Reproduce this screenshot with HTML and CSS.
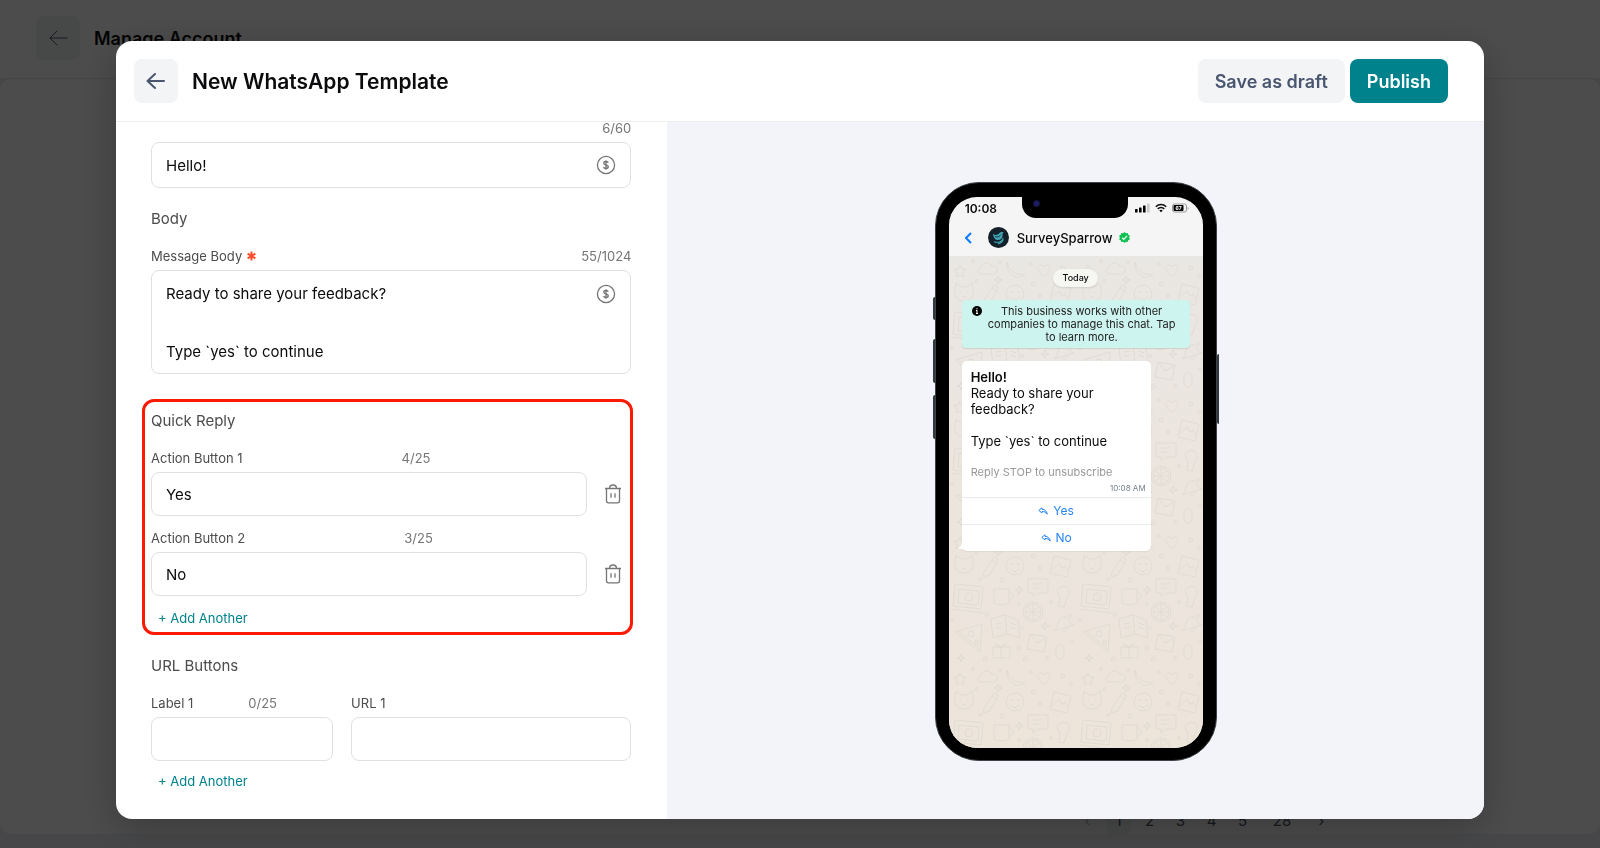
FILE: index.html
```html
<!DOCTYPE html>
<html lang="en">
<head>
    <meta charset="UTF-8">
    <meta name="viewport" content="width=device-width, initial-scale=1.0">
    <title>New WhatsApp Template</title>
    <link rel="stylesheet" href="styles.css">
</head>
<body>
    <div class="page">
        <header class="page-header">
            <button class="back-button" aria-label="Back">
                <svg width="20" height="16" viewBox="0 0 20 16"><path d="M9 1 2 8l7 7M2 8h17"/></svg>
            </button>
            <h1>Manage Account</h1>
        </header>
        <main class="page-content">
            <nav class="pagination">
                <a href="#" class="disabled">‹</a>
                <a href="#" class="current">1</a>
                <a href="#">2</a>
                <a href="#">3</a>
                <a href="#">4</a>
                <a href="#">5</a>
                <a href="#" class="last">28</a>
                <a href="#">›</a>
            </nav>
        </main>
    </div>

    <div class="overlay">
        <div class="modal" role="dialog" aria-labelledby="modalTitle">
            <div class="modal-header">
                <button class="back-button" aria-label="Back">
                    <svg width="20" height="16" viewBox="0 0 20 16"><path d="M9 1 1.500 8 9 15M1.500 8H18"/></svg>
                </button>
                <h2 id="modalTitle">New WhatsApp Template</h2>
                <div class="modal-actions">
                    <button class="btn btn-light">Save as draft</button>
                    <button class="btn btn-primary">Publish</button>
                </div>
            </div>

            <div class="modal-body">
                <form class="template-form">
                    <section class="form-section">
                        <div class="label-row spread"><span></span><span class="counter">6/60</span></div>
                        <div class="field header-field">
                            <input type="text" value="Hello!" aria-label="Header text">
                            <button type="button" class="icon-button" aria-label="Insert variable">
                                <svg width="20" height="20" viewBox="0 0 20 20"><circle cx="10" cy="10" r="8.6"/><path d="M12.2 7.9c-.2-.9-1.100-1.400-2.200-1.400-1.200 0-2.200.6-2.200 1.700 0 2.400 4.500 1.200 4.500 3.600 0 1.100-1 1.700-2.300 1.700-1.200 0-2.200-.5-2.400-1.500M10 5.200v9.600"/></svg>
                            </button>
                        </div>
                    </section>

                    <section class="form-section">
                        <h3>Body</h3>
                        <div class="label-row spread">
                            <label for="messageBody">Message Body
                                <svg class="required" width="9" height="10" viewBox="0 0 9 10"><path d="M4.500.5v9M.6 2.700l7.800 4.600M8.400 2.700.6 7.300"/></svg>
                            </label>
                            <span class="counter">55/1024</span>
                        </div>
                        <div class="field body-field">
                            <textarea id="messageBody" rows="3">Ready to share your feedback?

Type `yes` to continue</textarea>
                            <button type="button" class="icon-button" aria-label="Insert variable">
                                <svg width="20" height="20" viewBox="0 0 20 20"><circle cx="10" cy="10" r="8.6"/><path d="M12.2 7.9c-.2-.9-1.100-1.400-2.200-1.400-1.200 0-2.200.6-2.200 1.700 0 2.400 4.500 1.200 4.500 3.600 0 1.100-1 1.700-2.300 1.700-1.200 0-2.200-.5-2.400-1.500M10 5.200v9.600"/></svg>
                            </button>
                        </div>
                    </section>

                    <section class="form-section quick-reply">
                        <h3>Quick Reply</h3>
                        <div class="label-row wide">
                            <label for="action1">Action Button 1</label>
                            <span class="counter">4/25</span>
                        </div>
                        <div class="action-row">
                            <div class="field"><input type="text" id="action1" value="Yes"></div>
                            <button type="button" class="icon-button trash" aria-label="Delete">
                                <svg width="18" height="20" viewBox="0 0 18 20"><path d="M1 4.500h16M5.500 4.500C5.500 2.300 6.800 1 9 1s3.500 1.300 3.500 3.500M2.500 4.500v12.300c0 1.200.8 2 2 2h9c1.200 0 2-.8 2-2V4.500M7 9.300v4.400M11 9.300v4.400"/></svg>
                            </button>
                        </div>
                        <div class="label-row wide">
                            <label for="action2">Action Button 2</label>
                            <span class="counter">3/25</span>
                        </div>
                        <div class="action-row">
                            <div class="field"><input type="text" id="action2" value="No"></div>
                            <button type="button" class="icon-button trash" aria-label="Delete">
                                <svg width="18" height="20" viewBox="0 0 18 20"><path d="M1 4.500h16M5.500 4.500C5.500 2.300 6.800 1 9 1s3.500 1.300 3.500 3.500M2.500 4.500v12.300c0 1.200.8 2 2 2h9c1.200 0 2-.8 2-2V4.500M7 9.300v4.400M11 9.300v4.400"/></svg>
                            </button>
                        </div>
                        <button type="button" class="add-button">+ Add Another</button>
                    </section>

                    <section class="form-section">
                        <h3>URL Buttons</h3>
                        <div class="url-row">
                            <div class="url-label">
                                <div class="label-row narrow">
                                    <label for="urlLabel">Label 1</label>
                                    <span class="counter">0/25</span>
                                </div>
                                <div class="field"><input type="text" id="urlLabel"></div>
                            </div>
                            <div class="url-value">
                                <div class="label-row"><label for="url1">URL 1</label></div>
                                <div class="field"><input type="text" id="url1"></div>
                            </div>
                        </div>
                        <button type="button" class="add-button">+ Add Another</button>
                    </section>
                </form>

                <div class="preview">
                    <div class="phone">
                        <span class="side-key mute"></span>
                        <span class="side-key volume-up"></span>
                        <span class="side-key volume-down"></span>
                        <span class="side-key power"></span>
                        <div class="screen">
                            <div class="notch"><span class="camera"></span></div>
                            <div class="status-bar">
                                <span class="clock">10:08</span>
                                <div class="status-icons">
                                    <svg width="15" height="10" viewBox="0 0 15 10"><rect x="0" y="6" width="2.600" height="3.500" rx=".6"/><rect x="4" y="4.500" width="2.600" height="5" rx=".6"/><rect x="8" y="2.500" width="2.600" height="7" rx=".6"/><rect x="12" y=".5" width="2.600" height="9" rx=".6" fill="#c9c9c9"/></svg>
                                    <svg width="12" height="10" viewBox="0 0 12 10"><path d="M.8 3.700a7.500 7.500 0 0 1 10.400 0M2.700 5.900a4.800 4.800 0 0 1 6.600 0" fill="none" stroke="#111" stroke-width="1.500"/><path d="M4.300 7.500a2.500 2.500 0 0 1 3.400 0L6 9.300z"/></svg>
                                    <svg width="17" height="10" viewBox="0 0 17 10"><rect x=".5" y="1" width="14" height="8" rx="2" fill="#f5f5f5" stroke="#999"/><rect x="1.500" y="2" width="10" height="6" rx="1"/><text x="3.500" y="7" font-size="5" font-weight="700" fill="#fff">67</text><path d="M15.700 4v2.400q1-.2 1-1.200t-1-1.200z" fill="#999"/></svg>
                                </div>
                            </div>
                            <div class="chat-header">
                                <svg class="chat-back" width="7" height="12" viewBox="0 0 7 12"><path d="M6 1 1 6l5 5"/></svg>
                                <svg class="avatar" width="21" height="21" viewBox="0 0 21 21"><circle cx="10.500" cy="10.500" r="10.500" fill="#14212a"/><path d="M5 6.500c2.200 2.600 4.600 1.500 6.200-.2 1.300-1.400 3-1.600 4.500-1l-1.200 1.500c.5 4.500-1.500 6-4 6.200-3 .2-5-1.500-5.500-6.500z" fill="#3fa3b1"/><path d="M6 14.800c4 1.200 8 .3 9.200-3.600M10 16.800c3-.6 4.600-2 5.200-4.400" fill="none" stroke="#3fa3b1" stroke-width="1.200"/><path d="M7 9.500c2 1 4.200.4 5.600-1.500" fill="none" stroke="#14212a" stroke-width=".8"/></svg>
                                <span class="chat-name">SurveySparrow</span>
                                <svg class="verified" width="11" height="11" viewBox="0 0 24 24"><path fill="#0fc152" d="m12 0 3 2.700 4-.7 1 4 3.700 1.700L22.200 12l1.500 4.300L20 18l-1 4-4-.7-3 2.700-3-2.700-4 .7-1-4-3.700-1.700L1.800 12 .3 7.700 4 6l1-4 4 .7z"/><path d="m7 12.500 3.500 3.500 7-7.500" fill="none" stroke="#fff" stroke-width="2.600"/></svg>
                            </div>
                            <div class="chat">
                                <svg class="wallpaper" width="100%" height="100%">
                                    <defs>
                                        <pattern id="doodles" width="128" height="136" patternUnits="userSpaceOnUse">
                                            <!-- star, cloud, banana, heart -->
                                            <path d="m11 9 2 4 4 .5-3 3 1 4.500-4-2.200-4 2.200 1-4.500-3-3L9 13z"/>
                                            <path d="M31 18a4 4 0 0 1 1-7 6 6 0 0 1 11-1 4 4 0 0 1 2 8z"/>
                                            <path d="M58 6c2 9 9 14 18 12-5 7-19 3-18-12z"/>
                                            <path d="M95 20c-8-5-7-11-3-11 2 0 3 2 3 2s1-2 3-2c4 0 5 6-3 11z"/>
                                            <!-- photo, cat, pencil -->
                                            <path d="m105 28 17 4-4 17-17-4zM104 41l6-6 3 5 3-2 2 4"/>
                                            <path d="m6 34 1-7 5 4h6l5-4 1 7c1 8-3 11-9 11S5 42 6 34zM12 36v1M18 36v1M13 40q2 2 4 0"/>
                                            <path d="m35 44 10-15 5 3-10 15-6 2zM43 32l5 3"/>
                                            <!-- smiley, chat bubble -->
                                            <circle cx="66" cy="38" r="9"/>
                                            <path d="M62 36h3M68 36h3M61 41q5 5 10 0"/>
                                            <path d="M79 51h20v14H89l-5 4v-4h-5zM84 56h9M84 60h6"/>
                                            <!-- laptop, mug -->
                                            <path d="m6 56 28 3-2 22-28-3zM10 61l20 2-1 14-20-2zM2 81l33 4"/>
                                            <circle cx="20" cy="69" r="4"/>
                                            <path d="M45 61h15v14q-7 4-15 0zM60 64q6 1 4 5t-4 3"/>
                                            <path d="M110 60c7-5 14 3 8 9l-3 10-5-1 1-10c-3-2-4-5-1-8z"/>
                                            <!-- orange slice, open book, bell -->
                                            <circle cx="84" cy="84" r="10"/>
                                            <circle cx="84" cy="84" r="8"/>
                                            <path d="M84 76v16M76 84h16M78 78l12 12M90 78 78 90"/>
                                            <path d="m42 91 14-4 13 5 2 18-13-4-14 4zM56 87l2 19M47 96l6-1M47 100l6-1M61 95l6 2M61 99l6 2"/>
                                            <path d="M105 103c5-2 2-12 9-14s6 8 11 8zM113 102q3 3 5-2"/>
                                            <!-- pizza, gift, envelope -->
                                            <path d="m6 104 27-8-2 28zM9 103l22 18"/>
                                            <circle cx="22" cy="106" r="3"/>
                                            <circle cx="28" cy="114" r="2"/>
                                            <path d="m81 106 17 3-3 15-17-3zM82 107l6 8 9-5"/>
                                            <path d="M44 119h17v11H44zM52 119v11M52 119c-7-6-7 0 0 0 7-6 7 0 0 0"/>
                                            <path d="m107 119 4-3 4 3v9l-4 4-4-4z"/>
                                            <!-- dots and sparkles between the drawings -->
                                            <path d="m49 20 1 3 3 1-3 1-1 3-1-3-3-1 3-1zM96 94l1 3 3 1-3 1-1 3-1-3-3-1 3-1zM70 58l1 3 3 1-3 1-1 3-1-3-3-1 3-1zM12 126l1 3 3 1-3 1-1 3-1-3-3-1 3-1z"/>
                                            <circle cx="24" cy="5" r="1.500"/><circle cx="51" cy="6" r="1.500"/><circle cx="82" cy="8" r="1.500"/>
                                            <circle cx="114" cy="12" r="2"/><circle cx="122" cy="20" r="1.500"/><circle cx="27" cy="25" r="1.500"/>
                                            <circle cx="84" cy="28" r="2"/><circle cx="91" cy="40" r="1.500"/><circle cx="31" cy="51" r="1.500"/>
                                            <circle cx="53" cy="52" r="2"/><circle cx="70" cy="76" r="1.500"/><circle cx="102" cy="74" r="1.500"/>
                                            <circle cx="38" cy="86" r="2"/><circle cx="121" cy="88" r="1.500"/><circle cx="73" cy="100" r="1.500"/>
                                            <circle cx="36" cy="131" r="2"/><circle cx="70" cy="120" r="1.500"/><circle cx="98" cy="130" r="1.500"/>
                                            <circle cx="123" cy="113" r="1.500"/><circle cx="3" cy="92" r="1.500"/><circle cx="76" cy="131" r="2"/>
                                        </pattern>
                                    </defs>
                                    <rect width="100%" height="100%" fill="url(#doodles)"/>
                                </svg>
                                <span class="day">Today</span>
                                <div class="notice">
                                    <svg width="10" height="10" viewBox="0 0 10 10"><circle cx="5" cy="5" r="5"/><path d="M5 4.300v3.200M4 4.500h1M4 7.500h2M5 2.200v1.200" stroke="#fff" stroke-width="1"/></svg>
                                    <p>This business works with other companies to manage this chat. Tap to learn more.</p>
                                </div>
                                <div class="bubble">
                                    <svg class="tail" width="8" height="6" viewBox="0 0 8 6"><path d="M4 0v6L0 5.500Q3 4 4 0zM4 0h4v6H4z"/></svg>
                                    <div class="bubble-text">
                                        <p><strong>Hello!</strong></p>
                                        <p>Ready to share your feedback?</p>
                                        <br>
                                        <p>Type `yes` to continue</p>
                                    </div>
                                    <p class="bubble-footer">Reply STOP to unsubscribe</p>
                                    <time class="bubble-time">10:08 AM</time>
                                    <button class="reply-button">
                                        <svg width="10" height="8" viewBox="0 0 10 8"><path d="M4 .8.800 3.400 4 6V4.500c2.300-.1 4 .6 5.200 2.700C9 4.300 7 2.500 4 2.300z"/></svg>
                                        Yes
                                    </button>
                                    <button class="reply-button">
                                        <svg width="10" height="8" viewBox="0 0 10 8"><path d="M4 .8.800 3.400 4 6V4.500c2.300-.1 4 .6 5.200 2.700C9 4.300 7 2.500 4 2.300z"/></svg>
                                        No
                                    </button>
                                </div>
                            </div>
                        </div>
                    </div>
                </div>
            </div>
        </div>
    </div>
</body>
</html>
```

FILE: styles.css
```css
* {
    margin: 0;
    padding: 0;
    box-sizing: border-box;
    font-family: Inter, "Liberation Sans", sans-serif;
}

:root {
    --primary-color: #00828d;
    --text-color: #0b0b0d;
    --label-color: #4c4c4c;
    --muted-color: #757575;
    --border-color: #e0e0e0;
    --light-color: #f3f4f6;
    --preview-color: #f3f4f9;
}

body {
    color: var(--text-color);
    overflow: hidden;
}

button {
    border: none;
    background: none;
    cursor: pointer;
}

svg {
    display: block;
    flex-shrink: 0;
}

/* Page behind the modal */
.page {
    display: flex;
    flex-direction: column;
    height: 100vh;
    padding-bottom: 14px;
    background: #eeeff4;
}

.page-header {
    display: flex;
    align-items: center;
    gap: 14px;
    height: 78px;
    padding: 0 36px 2px;
    background: white;
}

.page-header h1 {
    font-size: 18px;
    font-weight: 600;
}

.page-content {
    flex: 1;
    display: flex;
    align-items: flex-end;
    justify-content: flex-end;
    padding-right: 267px;
    background: white;
    border-top: 1px solid #e4e4e4;
    border-radius: 12px;
}

.pagination {
    display: flex;
    gap: 8px;
}

.pagination a {
    width: 23px;
    height: 28px;
    line-height: 30px;
    font-size: 15px;
    text-align: center;
    text-decoration: none;
    color: #4a5568;
    border-radius: 4px;
}

.pagination .current {
    background: #eff2f2;
}

.pagination .disabled {
    color: #b5bac2;
}

.pagination .last {
    width: 40px;
}

.back-button {
    display: flex;
    align-items: center;
    justify-content: center;
    width: 44px;
    height: 44px;
    background: var(--light-color);
    border-radius: 8px;
}

.back-button path {
    fill: none;
    stroke: #4a5670;
    stroke-width: 2;
    stroke-linecap: round;
    stroke-linejoin: round;
}

.page-header .back-button {
    background: #eff2f2;
}

.page-header .back-button path {
    stroke-width: 1;
}

/* Modal */
.overlay {
    position: fixed;
    inset: 0;
    display: flex;
    padding: 41px 116px 29px;
    background: rgba(0, 0, 0, 0.7);
}

.modal {
    flex: 1;
    display: flex;
    flex-direction: column;
    min-width: 0;
    background: white;
    border-radius: 16px;
    overflow: hidden;
    box-shadow: 0 10px 40px rgba(0, 0, 0, 0.25);
}

.modal-header {
    display: flex;
    align-items: center;
    gap: 14px;
    padding: 18px 36px 18px 18px;
    border-bottom: 1px solid #eeeeef;
}

.modal-header h2 {
    font-size: 21px;
    font-weight: 600;
}

.modal-actions {
    display: flex;
    gap: 5px;
    margin-left: auto;
}

.btn {
    height: 44px;
    padding: 0 17px;
    border-radius: 8px;
    font-size: 18px;
    font-weight: 600;
}

.btn-light {
    background: var(--light-color);
    color: #4a5670;
}

.btn-primary {
    background: var(--primary-color);
    color: white;
}

.modal-body {
    flex: 1;
    display: grid;
    grid-template-columns: 27fr 40fr;
    min-height: 0;
}

/* Form, scrolled to its end */
.template-form {
    display: flex;
    flex-direction: column;
    justify-content: flex-end;
    gap: 19px;
    min-height: 0;
    padding: 0 36px 29px 35px;
    overflow: hidden;
}

.form-section h3 {
    margin-bottom: 16px;
    font-size: 15px;
    font-weight: 400;
    line-height: 24px;
    color: var(--label-color);
}

.label-row {
    display: flex;
    margin-bottom: 5px;
    font-size: 13px;
    line-height: 18px;
    color: var(--label-color);
}

.label-row.spread {
    justify-content: space-between;
}

.label-row.wide {
    gap: 159px;
}

.label-row.narrow {
    gap: 55px;
}

.label-row label {
    display: flex;
    align-items: center;
    gap: 5px;
}

.counter {
    color: var(--muted-color);
}

.required {
    fill: none;
    stroke: #fb4f2c;
    stroke-width: 2;
}

.field {
    display: flex;
    align-items: center;
    flex: 1;
    height: 44px;
    padding: 0 14px;
    background: white;
    border: 1px solid var(--border-color);
    border-radius: 8px;
}

.field input,
.field textarea {
    flex: 1;
    width: 100%;
    min-width: 0;
    border: none;
    outline: none;
    background: none;
    font-size: 15px;
    color: var(--text-color);
}

.field textarea {
    line-height: 29px;
    resize: none;
    overflow: hidden;
}

.header-field {
    height: 46px;
}

.body-field {
    align-items: flex-start;
    height: 104px;
    padding-top: 8px;
}

.icon-button {
    display: flex;
    align-items: center;
    justify-content: center;
    height: 29px;
}

.icon-button svg {
    fill: none;
    stroke: #757575;
    stroke-width: 1.3;
}

.quick-reply {
    margin: 6px -2px 0 -9px;
    padding: 7px 0 5px 6px;
    border: 3px solid #fb1b05;
    border-radius: 12px;
}

.action-row {
    display: flex;
    align-items: center;
    gap: 9px;
    margin-bottom: 13px;
}

.trash {
    width: 34px;
}

.add-button {
    display: block;
    padding: 0 7px;
    font-size: 13px;
    line-height: 18px;
    color: var(--primary-color);
}

.url-row {
    display: flex;
    gap: 18px;
    margin-bottom: 11px;
}

.url-label {
    flex: 182;
}

.url-value {
    flex: 280;
}

/* Phone preview */
.preview {
    display: flex;
    align-items: center;
    justify-content: center;
    background: var(--preview-color);
}

.phone {
    position: relative;
    width: 282px;
    margin-top: 1px;
    padding: 14px 13px 12px;
    background: black;
    border: 1px solid #3d4248;
    border-radius: 44px;
}

.side-key {
    position: absolute;
    left: -3px;
    width: 2px;
    height: 44px;
    background: #33383e;
    border-radius: 2px 0 0 2px;
}

.mute {
    top: 114px;
    height: 23px;
}

.volume-up {
    top: 156px;
}

.volume-down {
    top: 212px;
}

.power {
    top: 171px;
    left: auto;
    right: -3px;
    height: 70px;
}

.screen {
    position: relative;
    display: flex;
    flex-direction: column;
    height: 551px;
    background: #f5f5f5;
    border-radius: 28px;
    overflow: hidden;
}

.notch {
    position: absolute;
    top: 0;
    left: 73px;
    width: 106px;
    height: 21px;
    background: black;
    border-radius: 0 0 14px 14px;
}

.camera {
    position: absolute;
    top: 3px;
    left: 11px;
    width: 7px;
    height: 7px;
    background: radial-gradient(#25257a, #0a0a22);
    border-radius: 50%;
}

.status-bar {
    display: flex;
    align-items: center;
    justify-content: space-between;
    height: 23px;
    padding: 0 14px 0 16px;
}

.clock {
    font-size: 12px;
    font-weight: 600;
}

.status-icons {
    display: flex;
    gap: 5px;
}

.chat-header {
    display: flex;
    align-items: center;
    height: 36px;
    padding: 0 16px;
}

.chat-back {
    margin-right: 16px;
    fill: none;
    stroke: #0a7cff;
    stroke-width: 2;
}

.chat-name {
    margin: 0 6px 0 8px;
    font-size: 13px;
    font-weight: 500;
}

.chat {
    position: relative;
    flex: 1;
    display: flex;
    flex-direction: column;
    align-items: flex-start;
    padding: 13px;
    background: linear-gradient(#e9e7e3, #ece5de 45%, #ede4da);
}

.wallpaper {
    position: absolute;
    inset: 0;
}

.wallpaper path,
.wallpaper circle {
    fill: none;
    stroke: #e1dbd3;
    stroke-width: 1;
    stroke-linejoin: round;
}

.day,
.notice,
.bubble {
    position: relative;
}

.day {
    align-self: center;
    margin-bottom: 13px;
    padding: 0 9px;
    background: #f6f6f3;
    border-radius: 9px;
    box-shadow: 0 1px 2px rgba(0, 0, 0, 0.1);
    font-size: 9px;
    font-weight: 500;
    line-height: 18px;
}

.notice {
    display: flex;
    width: 100%;
    padding: 5px 8px 4px 10px;
    background: #cdf4ee;
    border-radius: 4px;
    box-shadow: 0 1px 1px rgba(0, 0, 0, 0.1);
}

.notice svg {
    margin-top: 1px;
}

.notice p {
    flex: 1;
    font-size: 11px;
    line-height: 13px;
    text-align: center;
    color: #222;
}

.bubble {
    width: 189px;
    margin-top: 13px;
    background: white;
    border-radius: 5px;
    box-shadow: 0 1px 1px rgba(0, 0, 0, 0.05);
}

.tail {
    position: absolute;
    left: -4px;
    bottom: 2px;
    fill: white;
}

.bubble-text {
    padding: 8px 9px 0;
    font-size: 13px;
    line-height: 16px;
}

.bubble-text strong {
    font-weight: 600;
}

.bubble-footer {
    padding: 15px 9px 0;
    font-size: 11px;
    line-height: 16px;
    color: #999;
}

.bubble-time {
    display: block;
    padding: 1px 5px 2px;
    font-size: 8px;
    line-height: 14px;
    text-align: right;
    color: #777f88;
}

.reply-button {
    display: flex;
    align-items: center;
    justify-content: center;
    gap: 5px;
    width: 100%;
    height: 27px;
    border-top: 1px solid #ebebeb;
    font-size: 12px;
    color: #2684f5;
}

.reply-button path {
    fill: none;
    stroke: #2684f5;
    stroke-width: 1;
    stroke-linejoin: round;
}
```
